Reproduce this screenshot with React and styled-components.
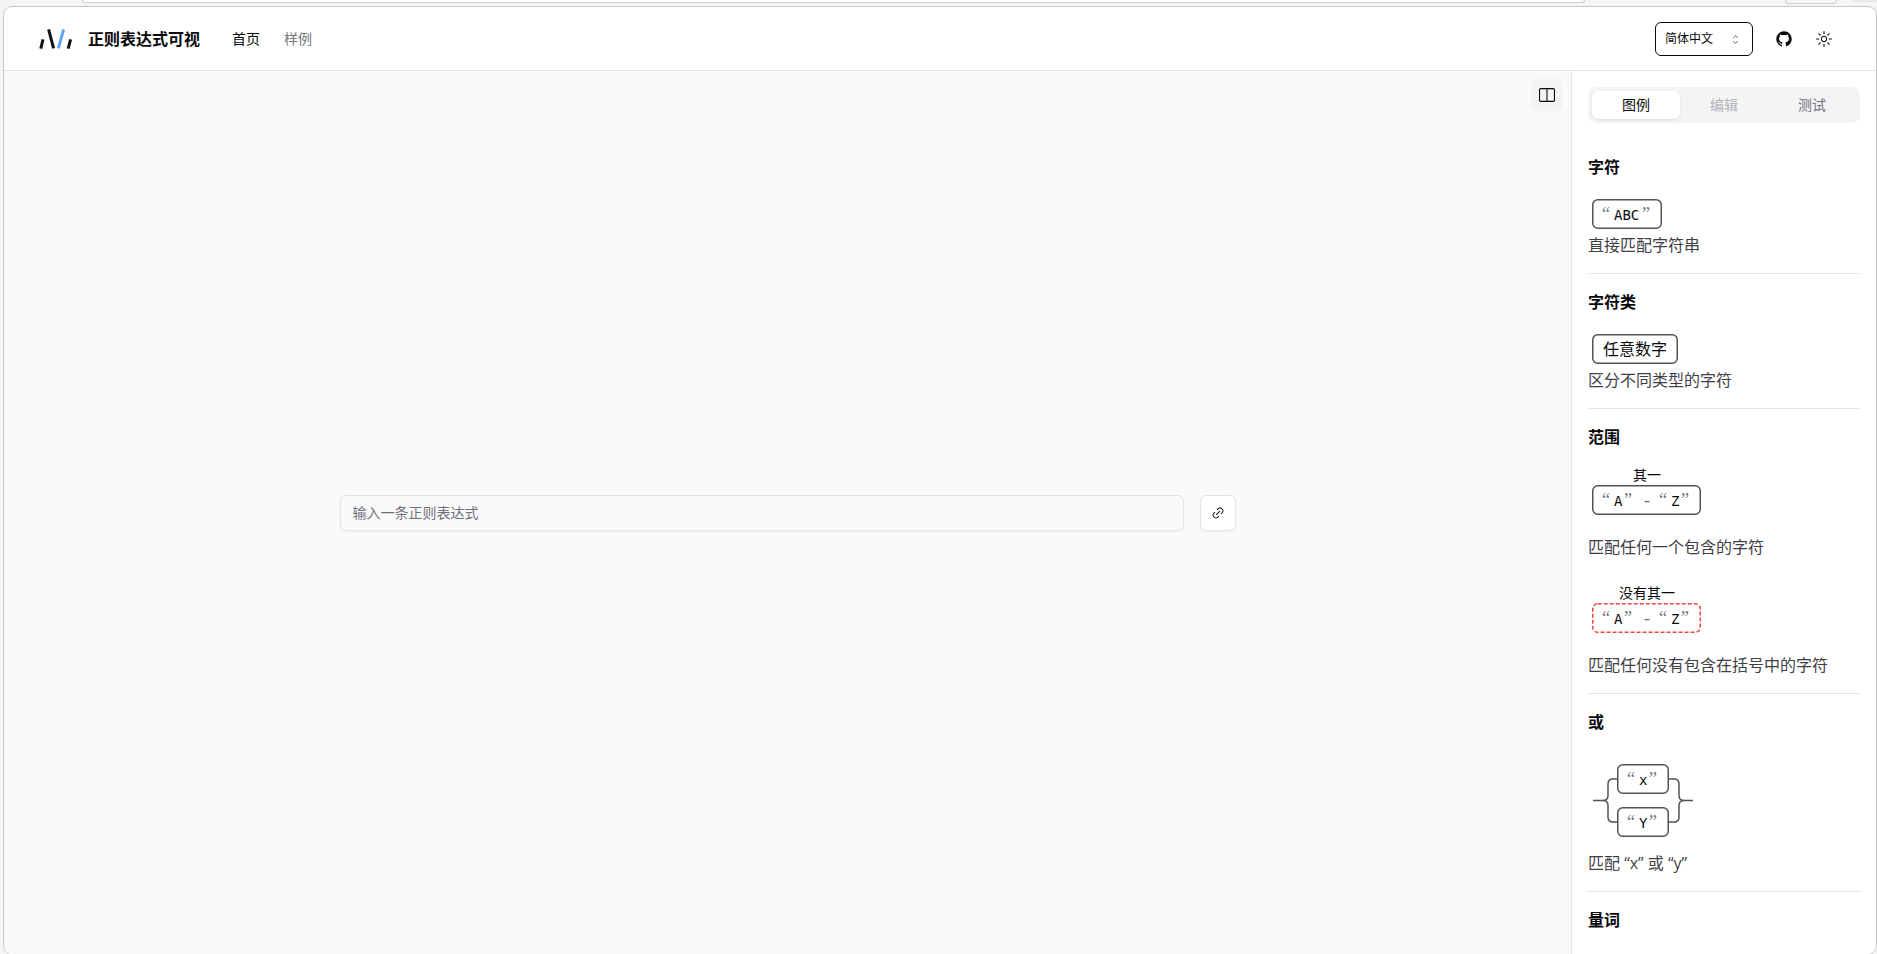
import React, { useState } from "react";
import styled, { createGlobalStyle } from "styled-components";
import {
  RxCaretSort,
  RxGithubLogo,
  RxLink2,
  RxSun,
  RxViewVertical,
} from "react-icons/rx";

const tabs = [
  { id: "legend", label: "图例" },
  { id: "edit", label: "编辑", disabled: true },
  { id: "test", label: "测试" },
];

const Logo = () => (
  <svg width="36" height="24" viewBox="0 0 36 24" fill="none" strokeWidth="3" aria-hidden="true">
    <path d="M5 12.4L2.8 21.6" stroke="#111" />
    <path d="M10.6 2.4L15.6 21.4" stroke="#111" />
    <path d="M25.6 2.4L20.4 21.4" stroke="#60a5fa" />
    <path d="M32.6 12.4L30.2 21.6" stroke="#111" />
  </svg>
);

const NodeBox = ({ x = 4, y = 4, width, negate }) => (
  <Box x={x + 0.75} y={y + 0.75} width={width - 1.5} height="28.5" rx="5" $negate={negate} />
);

const Quoted = ({ x, y, children }) => (
  <>
    <Mark x={x} y={y}>“</Mark>
    <Glyphs x={x + 12} y={y}>{children}</Glyphs>
    <Mark x={x + 13 + children.length * 9} y={y}>”</Mark>
  </>
);

const CharacterDiagram = () => (
  <Diagram width="78" height="38">
    <NodeBox width={70} />
    <Quoted x={14} y={25}>ABC</Quoted>
  </Diagram>
);

const ClassDiagram = () => (
  <Diagram width="94" height="38">
    <NodeBox width={86} />
    <Label x="47" y="25" textAnchor="middle">任意数字</Label>
  </Diagram>
);

const RangeDiagram = ({ label, negate }) => (
  <Diagram width="117" height="70">
    <Label x="59" y="15" textAnchor="middle" $small>{label}</Label>
    <NodeBox y={20} width={109} negate={negate} />
    <Quoted x={14} y={41}>A</Quoted>
    <Mark x="56" y="41">-</Mark>
    <Quoted x={71} y={41}>Z</Quoted>
  </Diagram>
);

const ChoiceDiagram = () => (
  <Diagram width="110" height="101">
    <Wire d="M5 50.5H15Q20 50.5 20 45.5V34Q20 29 25 29H29" />
    <Wire d="M15 50.5Q20 50.5 20 55.5V67Q20 72 25 72H29" />
    <Wire d="M81 29H86Q91 29 91 34V45.5Q91 50.5 96 50.5H105" />
    <Wire d="M81 72H86Q91 72 91 67V55.5Q91 50.5 96 50.5" />
    <NodeBox x={29} y={14} width={52} />
    <NodeBox x={29} y={57} width={52} />
    <Quoted x={39} y={35}>x</Quoted>
    <Quoted x={39} y={78}>Y</Quoted>
  </Diagram>
);

const legends = [
  {
    name: "字符",
    cases: [{ diagram: <CharacterDiagram />, desc: "直接匹配字符串" }],
  },
  {
    name: "字符类",
    cases: [{ diagram: <ClassDiagram />, desc: "区分不同类型的字符" }],
  },
  {
    name: "范围",
    cases: [
      { diagram: <RangeDiagram label="其一" />, desc: "匹配任何一个包含的字符" },
      {
        diagram: <RangeDiagram label="没有其一" negate />,
        desc: "匹配任何没有包含在括号中的字符",
      },
    ],
  },
  {
    name: "或",
    cases: [{ diagram: <ChoiceDiagram />, desc: "匹配 “x” 或 “y”" }],
  },
  { name: "量词", cases: [] },
];

const App = () => {
  const [tab, setTab] = useState("legend");
  const [regex, setRegex] = useState("");
  const [language, setLanguage] = useState("zh");
  const [showPanel, setShowPanel] = useState(true);

  return (
    <>
      <GlobalStyle />
      <Chrome aria-hidden="true">
        <AddressBar />
        <Pill />
        <Corner />
      </Chrome>
      <Frame>
        <Header>
          <Brand href="#">
            <Logo />
            <h1>正则表达式可视</h1>
          </Brand>
          <Nav>
            <NavLink href="#" $active>首页</NavLink>
            <NavLink href="#samples">样例</NavLink>
          </Nav>
          <SelectWrap>
            <select
              aria-label="语言"
              value={language}
              onChange={(e) => setLanguage(e.target.value)}
            >
              <option value="zh">简体中文</option>
              <option value="en">English</option>
            </select>
            <RxCaretSort size={15} />
          </SelectWrap>
          <IconLink href="#github" aria-label="GitHub">
            <RxGithubLogo size={16} />
          </IconLink>
          <IconButton type="button" aria-label="主题">
            <RxSun size={16} />
          </IconButton>
        </Header>
        <Body>
          <Main>
            <PanelToggle
              type="button"
              aria-label="侧栏"
              aria-pressed={showPanel}
              onClick={() => setShowPanel(!showPanel)}
            >
              <RxViewVertical size={16} />
            </PanelToggle>
            <Editor onSubmit={(e) => e.preventDefault()}>
              <RegexInput
                type="text"
                aria-label="正则表达式"
                placeholder="输入一条正则表达式"
                value={regex}
                onChange={(e) => setRegex(e.target.value)}
              />
              <CopyButton type="button" aria-label="复制链接">
                <RxLink2 size={14} />
              </CopyButton>
            </Editor>
          </Main>
          {showPanel && (
            <Sidebar>
              <TabList role="tablist">
                {tabs.map(({ id, label, disabled }) => (
                  <Tab
                    key={id}
                    type="button"
                    role="tab"
                    aria-selected={tab === id}
                    disabled={disabled}
                    $active={tab === id}
                    onClick={() => setTab(id)}
                  >
                    {label}
                  </Tab>
                ))}
              </TabList>
              {tab === "legend" &&
                legends.map(({ name, cases }) => (
                  <Legend key={name}>
                    <h2>{name}</h2>
                    {cases.length > 0 && (
                      <Cases>
                        {cases.map(({ diagram, desc }) => (
                          <div key={desc}>
                            {diagram}
                            <p>{desc}</p>
                          </div>
                        ))}
                      </Cases>
                    )}
                  </Legend>
                ))}
            </Sidebar>
          )}
        </Body>
      </Frame>
    </>
  );
};

const GlobalStyle = createGlobalStyle`
  * {
    box-sizing: border-box;
  }
  html {
    height: 100%;
    overflow: hidden;
  }
  body {
    margin: 0;
    background: #f5f5f5;
    color: #09090b;
    font-family: "Open Sans", "Noto Sans CJK SC", sans-serif;
    font-size: 16px;
    line-height: 24px;
  }
  h1, h2, p {
    margin: 0;
  }
  button, input, select {
    font-family: inherit;
  }
  #root {
    display: flex;
    flex-direction: column;
    height: 100vh;
  }
`;

/* bottom edge of the browser toolbar */
const Chrome = styled.div`
  flex: none;
  display: flex;
  align-items: flex-start;
  height: 6px;
  padding-left: 82px;
`;

const AddressBar = styled.div`
  flex: 1;
  height: 3px;
  border: 1px solid #cfcfcf;
  border-top: 0;
  border-radius: 0 0 10px 10px;
  background: #fff;
`;

const Pill = styled.div`
  width: 52px;
  height: 4px;
  margin-left: 200px;
  border: 1px solid #cfcfcf;
  border-top: 0;
  border-radius: 0 0 12px 12px;
`;

const Corner = styled.div`
  width: 24px;
  height: 2px;
  margin-left: 16px;
  background: #e9e9e9;
`;

const Frame = styled.div`
  flex: none;
  display: flex;
  flex-direction: column;
  height: calc(100vh - 5px);
  margin-left: 3px;
  border: 1px solid #c8c8c8;
  border-radius: 9px;
  background: #fff;
  overflow: hidden;
`;

const Header = styled.header`
  flex: none;
  display: flex;
  align-items: center;
  height: 64px;
  padding: 0 32px 0 34px;
  border-bottom: 1px solid #e4e4e7;
`;

const Brand = styled.a`
  display: flex;
  align-items: center;
  gap: 14px;
  color: inherit;
  text-decoration: none;
  h1 {
    font-size: 16px;
    font-weight: 600;
  }
`;

const Nav = styled.nav`
  flex: 1;
  display: flex;
  gap: 24px;
  margin-left: 32px;
`;

const NavLink = styled.a`
  color: ${({ $active }) => ($active ? "#09090b" : "#777779")};
  font-size: 14px;
  text-decoration: none;
`;

const SelectWrap = styled.div`
  position: relative;
  margin-right: 11px;
  select {
    appearance: none;
    display: block;
    width: 98px;
    height: 34px;
    padding: 0 24px 0 9px;
    border: 1px solid #09090b;
    border-radius: 6px;
    background: #fff;
    color: #09090b;
    font-size: 12px;
  }
  svg {
    position: absolute;
    top: 10px;
    right: 10px;
    color: #858588;
    pointer-events: none;
  }
`;

const IconButton = styled.button`
  display: flex;
  align-items: center;
  justify-content: center;
  width: 40px;
  height: 36px;
  padding: 0;
  border: 0;
  border-radius: 6px;
  background: transparent;
  color: #09090b;
`;

const IconLink = styled(IconButton).attrs({ as: "a" })``;

const Body = styled.div`
  flex: 1;
  display: flex;
  min-height: 0;
`;

const Main = styled.main`
  position: relative;
  flex: 1;
  display: flex;
  align-items: center;
  justify-content: center;
  background: #fafafa;
`;

const PanelToggle = styled(IconButton)`
  position: absolute;
  top: 8px;
  right: 8px;
  width: 32px;
  height: 32px;
  background: #f4f4f5;
`;

const Editor = styled.form`
  display: flex;
  gap: 16px;
  width: 100%;
  max-width: 896px;
`;

const RegexInput = styled.input`
  flex: 1;
  height: 36px;
  padding: 4px 12px;
  border: 1px solid #e4e4e7;
  border-radius: 6px;
  background: transparent;
  box-shadow: 0 1px 2px rgba(0, 0, 0, 0.05);
  font-size: 14px;
  outline: none;
  &::placeholder {
    color: #71717a;
  }
`;

const CopyButton = styled(IconButton)`
  width: 36px;
  border: 1px solid #e4e4e7;
  background: #fff;
  box-shadow: 0 1px 2px rgba(0, 0, 0, 0.05);
`;

const Sidebar = styled.aside`
  flex: none;
  width: 305px;
  padding: 16px 16px 0;
  border-left: 1px solid #e4e4e7;
  overflow: hidden;
`;

const TabList = styled.div`
  display: flex;
  height: 36px;
  margin-bottom: 16px;
  padding: 4px;
  border-radius: 8px;
  background: #f4f4f5;
`;

const Tab = styled.button`
  flex: 1;
  padding: 0 0 2px;
  border: 0;
  border-radius: 6px;
  background: ${({ $active }) => ($active ? "#fff" : "transparent")};
  box-shadow: ${({ $active }) => ($active ? "0 1px 3px rgba(0, 0, 0, 0.1)" : "none")};
  color: ${({ $active }) => ($active ? "#09090b" : "#71717a")};
  font-size: 14px;
  &:disabled {
    opacity: 0.5;
  }
`;

const Legend = styled.section`
  padding: 16px 0;
  & + & {
    border-top: 1px solid #e4e4e7;
  }
  h2 {
    font-size: 16px;
    font-weight: 600;
    line-height: 24px;
  }
  p {
    color: #3f3f46;
  }
`;

const Cases = styled.div`
  display: flex;
  flex-direction: column;
  gap: 24px;
  margin-top: 16px;
`;

const Diagram = styled.svg`
  display: block;
`;

const Box = styled.rect`
  fill: #fff;
  stroke: ${({ $negate }) => ($negate ? "#ef4444" : "#52525b")};
  stroke-width: 1.5;
  stroke-dasharray: ${({ $negate }) => ($negate ? "4 2" : "none")};
`;

const Wire = styled.path`
  fill: none;
  stroke: #52525b;
  stroke-width: 1.5;
`;

const Label = styled.text`
  fill: #09090b;
  font-size: ${({ $small }) => ($small ? "14px" : "16px")};
`;

const Glyphs = styled.text`
  fill: #09090b;
  font-family: "DejaVu Sans Mono", monospace;
  font-size: 14px;
`;

const Mark = styled.text`
  fill: #71717a;
  font-family: "Liberation Serif", serif;
  font-size: 18px;
`;

export default App;
